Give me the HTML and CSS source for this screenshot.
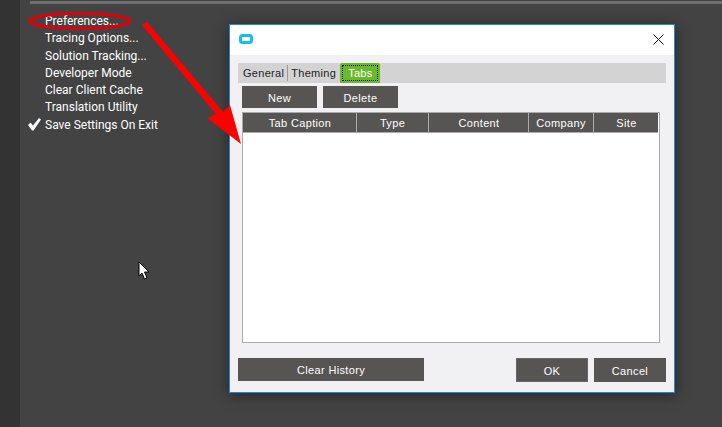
FILE: index.html
```html
<!DOCTYPE html>
<html lang="en">
<head>
<meta charset="utf-8">
<title>Preferences</title>
<link rel="stylesheet" href="styles.css">
</head>
<body>
<div class="app">
  <aside class="rail"></aside>
  <main class="workspace">
    <div class="rule"></div>
    <ul class="menu">
      <li class="menu-item">Preferences...</li>
      <li class="menu-item">Tracing Options...</li>
      <li class="menu-item">Solution Tracking...</li>
      <li class="menu-item">Developer Mode</li>
      <li class="menu-item">Clear Client Cache</li>
      <li class="menu-item">Translation Utility</li>
      <li class="menu-item">
        <svg class="check" viewBox="0 0 13 13"><path d="M0 7 L2.5 4.5 L5 7.5 L11 0 L13 1.5 L5.5 12.5 L4 12.5 Z" fill="#fff"/></svg>
        Save Settings On Exit
      </li>
    </ul>
  </main>
</div>

<section class="dialog">
  <header class="titlebar">
    <svg class="app-icon" viewBox="0 0 14 10"><rect x="1.5" y="1.5" width="11" height="7" rx="2" fill="#fff" stroke="#17bdf0" stroke-width="3"/></svg>
    <svg class="close" viewBox="0 0 11 11"><path d="M.5 .5 L10.5 10.5 M10.5 .5 L.5 10.5" fill="none" stroke="#111" stroke-width="1"/></svg>
  </header>
  <div class="body">
    <nav class="tabs">
      <span class="tab tab-general">General</span>
      <span class="tab tab-theming">Theming</span>
      <span class="tab tab-active"><span class="focus">Tabs</span></span>
    </nav>
    <div class="panel">
      <div class="toolbar">
        <button class="btn btn-small">New</button>
        <button class="btn btn-small">Delete</button>
      </div>
      <div class="grid">
        <div class="grid-head">
          <span class="col col-caption">Tab Caption</span>
          <span class="col col-type">Type</span>
          <span class="col col-content">Content</span>
          <span class="col col-company">Company</span>
          <span class="col col-site">Site</span>
        </div>
      </div>
    </div>
    <footer class="footer">
      <button class="btn btn-history">Clear History</button>
      <div class="footer-right">
        <button class="btn btn-action btn-default">OK</button>
        <button class="btn btn-action">Cancel</button>
      </div>
    </footer>
  </div>
</section>

<svg class="annotation" viewBox="0 0 722 427">
  <ellipse cx="80" cy="21" rx="50.5" ry="7.5" fill="none" stroke="#e0000c" stroke-width="3"/>
  <path d="M142 25 L147 22 L223 112 L230 105 L241 144 L207 118 L216 114 Z" fill="#f00"/>
</svg>

<svg class="cursor" viewBox="0 0 12 19"><path d="M1 1 L1 15 L4 12 L6.5 18 L9 17 L6.5 11 L11 11 Z" fill="#fff" stroke="#000" stroke-width="1"/></svg>
</body>
</html>
```
FILE: styles.css
```css
* { box-sizing: border-box; }
html, body { margin: 0; padding: 0; width: 722px; height: 427px; overflow: hidden; background: #444; }
body { position: relative; font-family: "Liberation Sans", Arial, sans-serif; }

.app { display: flex; height: 427px; }
.rail { width: 20px; background: #333; flex: none; }
.workspace { flex: 1; background: #434343; padding-top: 1px; }
.rule { height: 3px; margin-left: 10px; background: #6e6e6e; }

.menu { list-style: none; margin: 0; padding: 9px 0 0 25px; font-family: Roboto, sans-serif; font-size: 12px; color: #fff; }
.menu-item { position: relative; height: 17.3px; line-height: 17.3px; white-space: nowrap; }
.check { position: absolute; left: -17px; top: 1px; width: 13px; height: 13px; }

.dialog { position: absolute; left: 229px; top: 24px; width: 446px; height: 369px; border: 1px solid #1e88d8; background: #f1f1f4; box-shadow: 0 2px 14px rgba(0,0,0,.45); display: flex; flex-direction: column; }
.titlebar { height: 30px; background: #fff; display: flex; align-items: center; justify-content: space-between; padding: 0 10px 2px 9px; flex: none; }
.app-icon { width: 14px; height: 10px; }
.close { width: 11px; height: 11px; }

.body { flex: 1; padding: 8px 8px 10px 8px; display: flex; flex-direction: column; }
.tabs { height: 20px; background: #d3d3d3; display: flex; align-items: center; font-size: 11px; letter-spacing: .3px; color: #222; flex: none; }
.tab { line-height: 20px; }
.tab-general { border-right: 1px solid #999; height: 16px; line-height: 16px; padding: 0 3px 0 5px; }
.tab-theming { padding: 0 4px 0 3px; }
.tab-active { background: #6ab82c; color: #fff; padding: 2px; width: 40px; height: 20px; line-height: 15px; border-radius: 2px 2px 0 0; }
.focus { display: block; border: 1px dotted #111; padding: 0 5px; height: 16px; }

.panel { flex: none; padding: 3px 6px 0 4px; }
.toolbar { display: flex; gap: 6px; }
.btn { border: 0; margin: 0; padding: 1px 0 0; background: #575553; color: #fff; font-family: inherit; font-size: 11px; letter-spacing: .35px; }
.btn-small { width: 75px; height: 22px; }

.grid { margin-top: 4px; height: 231px; border: 1px solid #aaa; background: #fff; }
.grid-head { display: flex; height: 19px; margin-right: 1px; background: #575553; color: #fff; font-size: 11px; letter-spacing: .35px; border-bottom: 1px solid #aaa; box-sizing: content-box; }
.col { display: block; text-align: center; line-height: 20px; border-right: 1px solid #aaa; flex: none; }
.col-caption { width: 114px; padding-left: 1px; }
.col-type { width: 72px; }
.col-content { width: 100px; padding-left: 1px; }
.col-company { width: 65px; }
.col-site { width: 65px; border-right: 0; }

.footer { margin-top: auto; display: flex; justify-content: space-between; align-items: flex-start; }
.footer-right { display: flex; gap: 6px; }
.btn-history { width: 186px; height: 23px; }
.btn-action { width: 72px; height: 24px; }
.btn-default { border: 1px solid #666; }

.annotation { position: absolute; left: 0; top: 0; width: 722px; height: 427px; pointer-events: none; }
.cursor { position: absolute; left: 138px; top: 261px; width: 12px; height: 19px; }
```
